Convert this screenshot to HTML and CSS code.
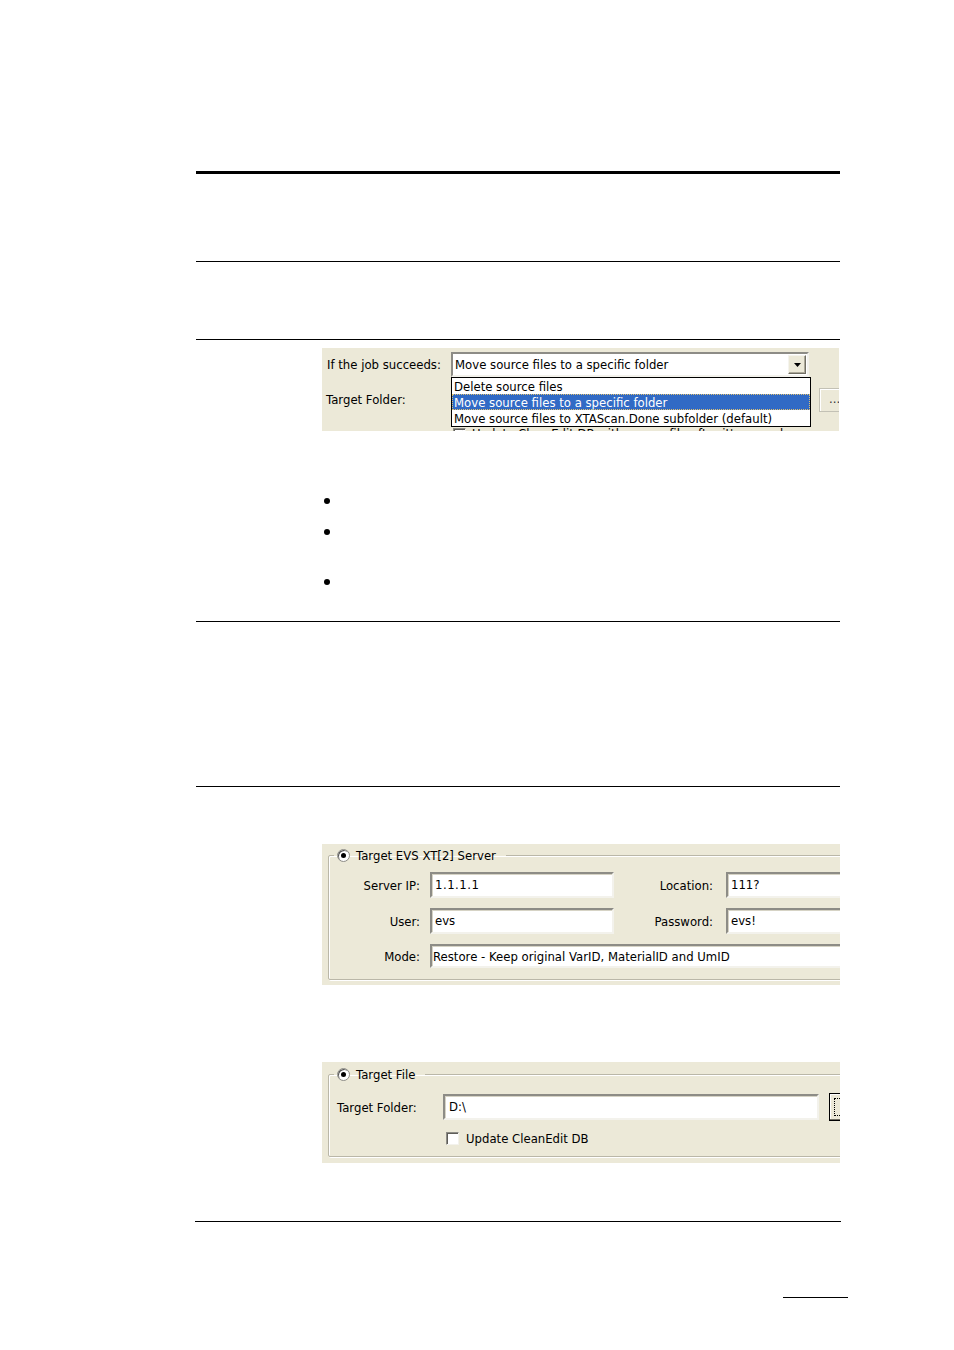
FILE: index.html
```html
<!DOCTYPE html>
<html>
<head>
<meta charset="utf-8">
<title>Job settings</title>
<link rel="stylesheet" href="styles.css">
</head>
<body>
<div class="doc">
  <div class="rule-thick"></div>
  <div class="sec sec1"></div>
  <div class="rule"></div>
  <div class="sec sec2"></div>
  <div class="rule"></div>
  <div class="sec sec3">
    <div class="shot shot1">
      <div class="s1-row s1-row1">
        <span class="s1-label">If the job succeeds:</span>
        <div class="combo combo1">
          <span class="combo-text">Move source files to a specific folder</span>
          <span class="drop-btn"><svg width="7" height="4" viewBox="0 0 7 4"><path d="M0 0H7L3.5 4Z" fill="#000"/></svg></span>
        </div>
      </div>
      <div class="s1-row s1-row2">
        <span class="s1-label">Target Folder:</span>
        <div class="field field1"></div>
        <div class="btn btn1">...</div>
      </div>
      <div class="s1-row s1-row3">
        <span class="check checked"><svg width="9" height="9" viewBox="0 0 9 9"><path d="M1 4L3.5 6.5L8 1.5" stroke="#000" stroke-width="2" fill="none"/></svg></span>
        <span class="check-label">Update CleanEdit DB with source file after it's moved</span>
      </div>
      <ul class="droplist">
        <li>Delete source files</li>
        <li class="sel">Move source files to a specific folder</li>
        <li>Move source files to XTAScan.Done subfolder (default)</li>
      </ul>
    </div>
    <ul class="bullets">
      <li class="b1"></li>
      <li class="b2"></li>
      <li class="b3"></li>
    </ul>
  </div>
  <div class="rule"></div>
  <div class="sec sec4"></div>
  <div class="rule"></div>
  <div class="sec sec5">
    <div class="shot shot2">
      <fieldset class="group group2">
        <legend class="legend"><span class="radio"><span class="radio-dot"></span></span><span class="legend-text">Target EVS XT[2] Server</span></legend>
        <div class="grid2">
          <span class="lbl lbl1">Server IP:</span>
          <div class="field f26"><span class="ftext ip">1.1.1.1</span></div>
          <span class="lbl lbl2">Location:</span>
          <div class="field f26"><span class="ftext">111?</span></div>
          <span class="lbl lbl1">User:</span>
          <div class="field f26"><span class="ftext">evs</span></div>
          <span class="lbl lbl2">Password:</span>
          <div class="field f26"><span class="ftext">evs!</span></div>
          <span class="lbl lbl1">Mode:</span>
          <div class="field mode"><span class="ftext mtext">Restore - Keep original VarID, MaterialID and UmID</span></div>
        </div>
      </fieldset>
    </div>
    <div class="shot shot3">
      <fieldset class="group group3">
        <legend class="legend"><span class="radio"><span class="radio-dot"></span></span><span class="legend-text">Target File</span></legend>
        <div class="s3-row">
          <span class="s3-label">Target Folder:</span>
          <div class="field f26 folder"><span class="ftext dtext">D:\</span></div>
          <div class="btn btn3"><span class="focus"></span></div>
        </div>
        <div class="s3-row s3-row2">
          <span class="check"></span>
          <span class="check-label">Update CleanEdit DB</span>
        </div>
      </fieldset>
    </div>
  </div>
  <div class="rule rule-last"></div>
  <div class="foot-rule"></div>
</div>
</body>
</html>
```

FILE: styles.css
```css
html, body {
  margin: 0;
  padding: 0;
  background: #fff;
}
body {
  font-family: "DejaVu Sans", "Liberation Sans", sans-serif;
  font-size: 11.7px;
  color: #000;
}
.doc {
  margin-left: 196px;
  width: 644px;
  padding-top: 171px;
}
.rule-thick {
  height: 3px;
  background: #000;
}
.rule {
  height: 1px;
  background: #000;
}
.rule-last {
  margin-left: -1px;
  width: 646px;
}
.sec1 { height: 87px; }
.sec2 { height: 77px; }
.sec3 { height: 281px; overflow: hidden; }
.sec4 { height: 164px; }
.sec5 { height: 434px; overflow: hidden; }

.shot {
  background: #ece9d8;
  overflow: hidden;
  position: relative;
  box-sizing: border-box;
  margin-left: 126px;
}

/* ---------- shot 1 ---------- */
.shot1 {
  margin-top: 8px;
  width: 517px;
  height: 83px;
  padding: 4px 0 0 5px;
}
.s1-row {
  display: flex;
  align-items: center;
  white-space: nowrap;
}
.s1-row1 { height: 25px; }
.s1-row2 { height: 24px; margin-top: 11px; }
.s1-row3 { height: 14px; margin-top: 15px; padding-left: 126px; }
.s1-label { width: 124px; flex: none; }
.s1-row2 .s1-label { margin-left: -1px; width: 125px; }

.field {
  box-sizing: border-box;
  background: #fff;
  border: 2px solid;
  border-color: #8d8c86 #f3f2ec #f3f2ec #8d8c86;
  box-shadow: inset 1px 1px 0 #d6d3c5;
  display: flex;
  align-items: center;
  white-space: nowrap;
  overflow: hidden;
}
.combo1 {
  box-sizing: border-box;
  width: 358px;
  height: 25px;
  background: #fff;
  border: 2px solid;
  border-color: #8d8c86 #f3f2ec #f3f2ec #8d8c86;
  display: flex;
  align-items: center;
  justify-content: space-between;
  padding-left: 2px;
  padding-right: 1px;
  white-space: nowrap;
}
.drop-btn {
  box-sizing: border-box;
  width: 18px;
  height: 19px;
  background: #ece9d8;
  border: 1px solid;
  border-color: #f5f4ee #716f64 #716f64 #f5f4ee;
  box-shadow: inset -1px -1px 0 #aca899;
  display: flex;
  align-items: center;
  justify-content: center;
  flex: none;
}
.field1 {
  width: 360px;
  height: 24px;
  flex: none;
}
.btn {
  box-sizing: border-box;
  background: #ece9d8;
  flex: none;
}
.btn1 {
  margin-left: 8px;
  width: 26px;
  height: 24px;
  border: 1px solid #c3c1b5;
  box-shadow: inset 1px 1px 0 #fff;
  padding-left: 9px;
  line-height: 20px;
  color: #333;
}
.check {
  box-sizing: border-box;
  width: 13px;
  height: 13px;
  flex: none;
  background: #fff;
  border: 1px solid;
  border-color: #8d8c86 #f3f2ec #f3f2ec #8d8c86;
  box-shadow: inset 1px 1px 0 #5e5d58;
  display: flex;
  align-items: center;
  justify-content: center;
}
.check-label { margin-left: 7px; }
.s1-row3 .check-label { margin-left: 6px; }

.droplist {
  position: absolute;
  left: 129px;
  top: 29px;
  width: 360px;
  box-sizing: border-box;
  margin: 0;
  padding: 0;
  list-style: none;
  background: #fff;
  border: 1px solid #000;
}
.droplist li {
  height: 16px;
  line-height: 16px;
  padding: 1px 0 0 2px;
  white-space: nowrap;
  box-sizing: border-box;
}
.droplist li.sel {
  background: #316ac5;
  color: #fff;
  outline: 1px dotted #e0c070;
  outline-offset: -1px;
}

/* bullets */
.bullets {
  list-style: none;
  margin: 0;
  padding: 0 0 0 128px;
}
.bullets li {
  height: 18px;
  display: flex;
  align-items: center;
}
.bullets li::before {
  content: "";
  width: 6px;
  height: 6px;
  border-radius: 50%;
  background: #000;
}
.b1 { margin-top: 61px; }
.b2 { margin-top: 13px; }
.b3 { margin-top: 32px; }

/* ---------- group boxes ---------- */
.group {
  margin: 0;
  min-width: 0;
  border: 1px solid #bab7a8;
  box-shadow: 1px 1px 0 #fff, inset 1px 1px 0 #fff;
  border-radius: 2px;
}
.legend {
  display: flex;
  align-items: center;
  height: 14px;
  padding: 0 10px 0 3px;
  margin-left: 5px;
  white-space: nowrap;
}
.legend-text { padding-top: 2px; }
.group3 .legend { margin-left: -3px; }
.radio {
  box-sizing: border-box;
  width: 13px;
  height: 13px;
  border-radius: 50%;
  background: #fff;
  border: 1px solid #8d8c86;
  box-shadow: inset 1px 1px 0 #555;
  display: flex;
  align-items: center;
  justify-content: center;
  margin-right: 6px;
}
.radio-dot {
  width: 5px;
  height: 5px;
  border-radius: 50%;
  background: #000;
}

/* shot 2 */
.shot2 {
  margin-top: 57px;
  width: 518px;
  height: 141px;
  padding: 4px 0 0 6px;
}
.group2 {
  width: 560px;
  padding: 10px 0 11px 0;
}
.grid2 {
  display: grid;
  grid-template-columns: 101px 184px 112px 150px;
  row-gap: 10px;
  align-items: center;
}
.lbl {
  text-align: right;
  white-space: nowrap;
  padding-top: 1px;
}
.lbl1 { padding-right: 10px; }
.lbl2 { padding-right: 13px; }
.f26 { height: 26px; }
.ftext { padding-left: 3px; }
.ip { letter-spacing: 0.5px; }
.mode {
  grid-column: 2 / span 3;
  height: 24px;
}
.mtext { padding-left: 1px; padding-top: 1px; }

/* shot 3 */
.shot3 {
  margin-top: 77px;
  width: 518px;
  height: 101px;
  padding: 5px 0 0 6px;
}
.group3 {
  width: 560px;
  padding: 12px 0 11px 8px;
}
.s3-row {
  display: flex;
  align-items: center;
  white-space: nowrap;
}
.s3-label { width: 106px; flex: none; padding-top: 1px; }
.folder { width: 376px; flex: none; }
.dtext { padding-left: 4px; }
.btn3 {
  margin-left: 10px;
  width: 30px;
  height: 28px;
  border: 1px solid #000;
  box-shadow: inset -1px -1px 0 #716f64, inset 1px 1px 0 #fff;
  padding: 4px;
}
.btn3 .focus {
  display: block;
  width: 100%;
  height: 100%;
  box-sizing: border-box;
  border: 1px dotted #000;
}
.s3-row2 {
  margin-top: 11px;
  padding-left: 109px;
  height: 13px;
}

/* footer */
.foot-rule {
  margin-top: 75px;
  margin-left: 587px;
  width: 65px;
  height: 1px;
  background: #000;
}
```
